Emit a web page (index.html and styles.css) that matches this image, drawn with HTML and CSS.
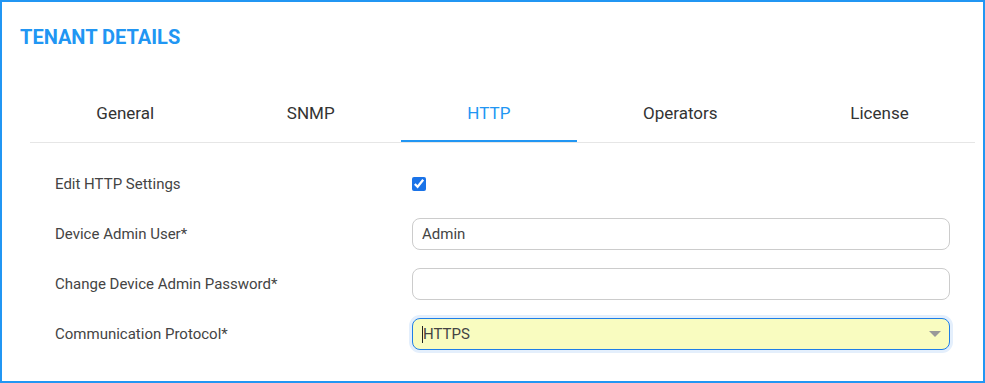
FILE: index.html
```html
<!DOCTYPE html>
<html lang="en">
<head>
    <meta charset="UTF-8">
    <title>Tenant Details</title>
    <link rel="stylesheet" href="styles.css">
</head>
<body>
    <div class="panel">
        <h1 class="panel-title">TENANT DETAILS</h1>

        <nav class="tabs">
            <a class="tab">General</a>
            <a class="tab">SNMP</a>
            <a class="tab active">HTTP</a>
            <a class="tab">Operators</a>
            <a class="tab">License</a>
        </nav>

        <form class="form">
            <div class="row">
                <label class="label">Edit HTTP Settings</label>
                <div class="control">
                    <input type="checkbox" class="check" checked>
                </div>
            </div>
            <div class="row">
                <label class="label">Device Admin User*</label>
                <div class="control">
                    <input type="text" class="field" value="Admin">
                </div>
            </div>
            <div class="row">
                <label class="label">Change Device Admin Password*</label>
                <div class="control">
                    <input type="password" class="field">
                </div>
            </div>
            <div class="row">
                <label class="label">Communication Protocol*</label>
                <div class="control">
                    <div class="select">
                        <span class="caret"></span>HTTPS
                        <span class="arrow"></span>
                    </div>
                </div>
            </div>
        </form>
    </div>
</body>
</html>
```

FILE: styles.css
```css
body {
    margin: 0;
    padding: 0;
    font-family: Roboto, 'Liberation Sans', sans-serif;
    background: #ffffff;
}

.panel {
    box-sizing: border-box;
    width: 985px;
    height: 383px;
    border: 2px solid #2196f3;
    overflow: hidden;
}

.panel-title {
    margin: 23px 0 0 18px;
    font-size: 20px;
    line-height: 24px;
    font-weight: 700;
    color: #2196f3;
}

/* tab strip */
.tabs {
    display: flex;
    margin: 54px 8px 0 28px;
    border-bottom: 1px solid #e6e6e6;
}

.tab {
    flex: 1 1 auto;
    text-align: center;
    font-size: 17px;
    line-height: 20px;
    color: #333333;
    padding: 0 0 17px;
    border-bottom: 2px solid transparent;
}

.tab.active {
    color: #2196f3;
    border-bottom-color: #2196f3;
}

/* form rows */
.form {
    margin: 16px 33px 0 53px;
}

.row {
    display: grid;
    grid-template-columns: 357px 1fr;
    align-items: center;
    height: 50px;
}

.label {
    font-size: 15px;
    color: #444444;
}

.control {
    display: flex;
    align-items: center;
}

.check {
    width: 14px;
    height: 14px;
    margin: 0;
    accent-color: #1a73e8;
}

.field {
    box-sizing: border-box;
    width: 100%;
    height: 32px;
    border: 1px solid #cccccc;
    border-radius: 8px;
    padding: 0 9px;
    font-family: Roboto, 'Liberation Sans', sans-serif;
    font-size: 15px;
    color: #444444;
    outline: none;
}

.select {
    position: relative;
    box-sizing: border-box;
    width: 100%;
    height: 32px;
    border: 1px solid #1f7ee8;
    border-radius: 8px;
    background: #f9fcc0;
    box-shadow: 0 0 0 3px #e4effc;
    padding: 0 9px;
    display: flex;
    align-items: center;
    font-size: 15px;
    color: #444444;
}

.caret {
    width: 1px;
    height: 17px;
    background: #222222;
}

.arrow {
    position: absolute;
    right: 8px;
    top: 12px;
    width: 0;
    height: 0;
    border-left: 6px solid transparent;
    border-right: 6px solid transparent;
    border-top: 6px solid #999999;
}
```
